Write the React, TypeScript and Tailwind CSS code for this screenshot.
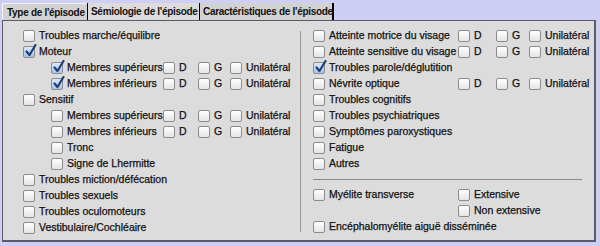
const font = { fontFamily: '"Liberation Sans", Arial, sans-serif' };

const Box = ({ checked = false }: { checked?: boolean }) => (
  <span
    className={
      "relative inline-block h-[12px] w-[12px] shrink-0 rounded-[2px] border border-[#8c8c8c] " +
      (checked
        ? "bg-gradient-to-b from-[#dfe9f7] to-[#a9c2e4]"
        : "bg-gradient-to-b from-white to-[#e4e4e4]")
    }
  >
    {checked && (
      <svg
        className="absolute -top-[3px] left-[1px]"
        width="12"
        height="13"
        viewBox="0 0 12 13"
      >
        <path
          d="M1.5 7.5 L4.5 11 L10.5 1"
          fill="none"
          stroke="#1d3f7a"
          strokeWidth="2.2"
          strokeLinecap="round"
          strokeLinejoin="round"
        />
      </svg>
    )}
  </span>
);

const Check = ({
  label,
  checked,
  className = "",
}: {
  label?: string;
  checked?: boolean;
  className?: string;
}) => (
  <div className={"flex h-4 shrink-0 items-center " + className}>
    <Box checked={checked} />
    {label && <span className="ml-[4px] whitespace-nowrap">{label}</span>}
  </div>
);

const Side = ({ d, g }: { d: string; g: string }) => (
  <>
    <Check label="D" className={d} />
    <Check label="G" className={g} />
    <Check label="Unilatéral" />
  </>
);

const LeftSub = ({ label, checked }: { label: string; checked?: boolean }) => (
  <div className="flex h-4 items-center pl-[28px]">
    <Check label={label} checked={checked} className="w-[112px]" />
    <Side d="w-[35px]" g="w-[32px]" />
  </div>
);

const RightRow = ({ label, checked }: { label: string; checked?: boolean }) => (
  <div className="flex h-4 items-center">
    <Check label={label} checked={checked} className="w-[145px]" />
    <Side d="w-[38px]" g="w-[33px]" />
  </div>
);

export default function App() {
  return (
    <div
      className="h-[246px] w-[600px] bg-[#cfcff6] px-[2px] pt-[3px] text-[10.5px] text-[#111] [-webkit-text-stroke:0.25px_#111]"
      style={font}
    >
      <div className="flex h-[17px] items-stretch whitespace-nowrap text-[10px] font-bold tracking-[-0.3px] [-webkit-text-stroke:0px]">
        <div className="flex w-[85px] shrink-0 items-center border-t border-l border-[#f2f2f2] bg-[#d2d2d2] pl-[4px]">
          Type de l'épisode
        </div>
        <div className="flex w-[113px] shrink-0 items-center border-x border-black bg-[#dcdcdc] pl-[3px]">
          Sémiologie de l'épisode
        </div>
        <div className="flex w-[134px] shrink-0 items-center border-r-2 border-black bg-[#d2d2d2] pl-[3px]">
          Caractéristiques de l'épisode
        </div>
      </div>
      <div className="flex h-[222px] w-[594px] border border-b-2 border-r-2 border-[#5a5a6a] bg-[#dcdcdc]">
        <div className="flex w-[297px] shrink-0 flex-col pl-[20px] pt-[7px]">
          <Check label="Troubles marche/équilibre" />
          <Check label="Moteur" checked />
          <LeftSub label="Membres supérieurs" checked />
          <LeftSub label="Membres inférieurs" checked />
          <Check label="Sensitif" />
          <LeftSub label="Membres supérieurs" />
          <LeftSub label="Membres inférieurs" />
          <Check label="Tronc" className="pl-[28px]" />
          <Check label="Signe de Lhermitte" className="pl-[28px]" />
          <Check label="Troubles miction/défécation" />
          <Check label="Troubles sexuels" />
          <Check label="Troubles oculomoteurs" />
          <Check label="Vestibulaire/Cochléaire" />
        </div>
        <div className="mt-[10px] mb-[8px] w-px shrink-0 bg-[#9a9a9a]" />
        <div className="flex min-w-0 flex-1 flex-col pl-[12px] pt-[7px]">
          <RightRow label="Atteinte motrice du visage" />
          <RightRow label="Atteinte sensitive du visage" />
          <Check label="Troubles parole/déglutition" checked />
          <RightRow label="Névrite optique" />
          <Check label="Troubles cognitifs" />
          <Check label="Troubles psychiatriques" />
          <Check label="Symptômes paroxystiques" />
          <Check label="Fatigue" />
          <Check label="Autres" />
          <div className="my-[7px] h-px w-[269px] bg-[#8a8a8a]" />
          <div className="flex items-start">
            <Check label="Myélite transverse" className="w-[145px]" />
            <div className="flex flex-col">
              <Check label="Extensive" />
              <Check label="Non extensive" />
            </div>
          </div>
          <Check label="Encéphalomyélite aiguë disséminée" />
        </div>
      </div>
    </div>
  );
}
